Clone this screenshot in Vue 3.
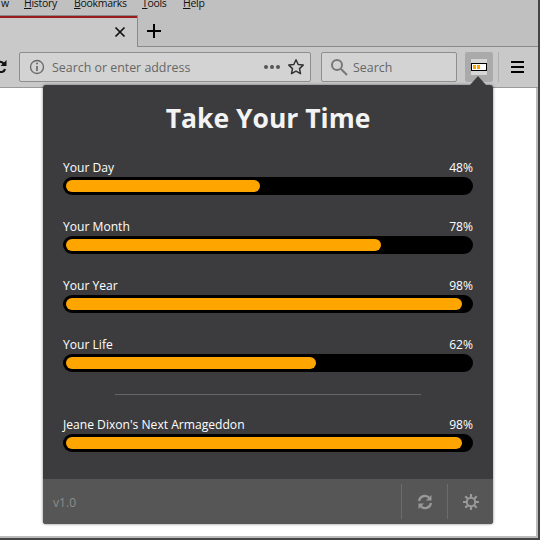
<script setup>
const bars = [
  { label: 'Your Day', pct: 48 },
  { label: 'Your Month', pct: 78 },
  { label: 'Your Year', pct: 98 },
  { label: 'Your Life', pct: 62 }
]
const last = { label: "Jeane Dixon's Next Armageddon", pct: 98 }
</script>

<template>
  <div class="window">
    <div class="menubar">
      <span class="m m-w">w</span>
      <span class="m m-h"><u>H</u>istory</span>
      <span class="m m-b"><u>B</u>ookmarks</span>
      <span class="m m-t"><u>T</u>ools</span>
      <span class="m"><u>H</u>elp</span>
    </div>
    <div class="tabrow">
      <div class="tab">
        <svg class="tab-x" width="12" height="12" viewBox="0 0 12 12"><path d="M1.500 1.500l9 9M10.500 1.500l-9 9" stroke="#111" stroke-width="1.700" fill="none"/></svg>
      </div>
      <svg class="plus" width="14" height="14" viewBox="0 0 14 14"><path d="M7 0v14M0 7h14" stroke="#000" stroke-width="2" fill="none"/></svg>
    </div>
    <div class="navrow">
      <svg class="reload" width="8" height="16" viewBox="0 0 8 16"><path d="M-4 4a6 6 0 0 1 8 1" stroke="#111" stroke-width="2.200" fill="none"/><path d="M6.500 1v6h-6z" fill="#111"/><path d="M-4 13h6a4 4 0 0 0 3-3" stroke="#111" stroke-width="2.200" fill="none"/></svg>
      <div class="urlbar">
        <svg width="16" height="16" viewBox="0 0 16 16"><circle cx="8" cy="8" r="6.500" stroke="#666" stroke-width="1.300" fill="none"/><path d="M8 7v5" stroke="#666" stroke-width="1.600"/><circle cx="8" cy="4.600" r="1" fill="#666"/></svg>
        <span class="url-text">Search or enter address</span>
        <span class="dots"><i></i><i></i><i></i></span>
        <svg width="18" height="18" viewBox="0 0 18 18"><path d="M9 1.800l2.200 4.700 5 .6-3.700 3.500 1 5.100L9 13.200l-4.500 2.500 1-5.100L1.800 7.100l5-.6z" stroke="#333" stroke-width="1.500" fill="none" stroke-linejoin="round"/></svg>
      </div>
      <div class="searchbar">
        <svg width="18" height="18" viewBox="0 0 18 18"><circle cx="7" cy="7" r="5" stroke="#777" stroke-width="2" fill="none"/><path d="M11 11l6 6" stroke="#777" stroke-width="2"/></svg>
        <span class="url-text">Search</span>
      </div>
      <div class="ext">
        <div class="ext-glow">
          <div class="ext-icon"><i></i><i></i></div>
        </div>
      </div>
      <div class="sep"></div>
      <svg class="burger" width="13" height="12" viewBox="0 0 13 12"><path d="M0 1h13M0 6h13M0 11h13" stroke="#000" stroke-width="2"/></svg>
    </div>
    <div class="page">
      <div class="popup">
        <div class="arrow"></div>
        <div class="popup-body">
          <h1>Take Your Time</h1>
          <div class="meter" v-for="b in bars" :key="b.label">
            <div class="meter-head"><span>{{ b.label }}</span><span>{{ b.pct }}%</span></div>
            <div class="track"><div class="fill" :style="{ width: b.pct + '%' }"></div></div>
          </div>
          <hr class="rule" />
          <div class="meter">
            <div class="meter-head"><span>{{ last.label }}</span><span>{{ last.pct }}%</span></div>
            <div class="track"><div class="fill" :style="{ width: last.pct + '%' }"></div></div>
          </div>
        </div>
        <div class="footer">
          <span class="version">v1.0</span>
          <div class="foot-btn">
            <svg width="16" height="16" viewBox="0 0 16 16"><path d="M2 7a6 6 0 0 1 10.500-3M14 9a6 6 0 0 1-10.500 3" stroke="#999" stroke-width="2.200" fill="none"/><path d="M14.500 1v5.500H9zM1.500 15V9.500H7z" fill="#999"/></svg>
          </div>
          <div class="foot-btn">
            <svg width="18" height="18" viewBox="0 0 18 18"><circle cx="9" cy="9" r="4.200" stroke="#999" stroke-width="2" fill="none"/><path d="M9 1v3M9 14v3M1 9h3M14 9h3M3.300 3.300l2.200 2.200M12.500 12.500l2.200 2.200M14.700 3.300l-2.200 2.200M5.500 12.500l-2.200 2.200" stroke="#999" stroke-width="2.200"/></svg>
          </div>
        </div>
      </div>
    </div>
    <div class="bottom"></div>
  </div>
</template>

<style>
html, body { margin: 0; padding: 0; background: #fff; }
</style>

<style scoped>
.window {
  width: 540px;
  height: 540px;
  box-sizing: border-box;
  border-right: 2px solid #454545;
  display: flex;
  flex-direction: column;
  overflow: hidden;
  font-family: "Open Sans", sans-serif;
  background: #c0c0c0;
}
.menubar {
  height: 15px;
  display: flex;
  align-items: flex-start;
  color: #111;
  overflow: hidden;
  flex: none;
}
.m { white-space: nowrap; font-size: 10.500px; letter-spacing: -0.300px; line-height: 14px; margin-top: -4px; }
.m-w { width: 24px; margin-left: 1px; }
.m-h { width: 50px; margin-left: -1px; }
.m-b { width: 68px; }
.m-t { width: 41px; }
.tabrow {
  height: 32px;
  flex: none;
  display: flex;
  align-items: center;
  box-sizing: border-box;
  border-bottom: 1px solid #8a8a8a;
}
.tab {
  width: 138px;
  height: 32px;
  box-sizing: border-box;
  background: #c9c9c9;
  border-top: 1px solid #8a8a8a;
  border-right: 1px solid #8a8a8a;
  box-shadow: inset 0 2px 0 #9b1c1c;
  display: flex;
  align-items: center;
  justify-content: flex-end;
  padding: 2px 11px 0 0;
}
.plus { margin-left: 9px; }
.navrow {
  height: 41px;
  flex: none;
  background: #c9c9c9;
  display: flex;
  align-items: center;
  box-sizing: border-box;
  border-bottom: 1px solid #9a9a9a;
}
.reload { margin-right: 11px; flex: none; }
.urlbar, .searchbar {
  height: 30px;
  box-sizing: border-box;
  border: 1px solid #8e8e8e;
  border-radius: 2px;
  background: #d3d3d3;
  display: flex;
  align-items: center;
}
.urlbar { width: 292px; padding: 0 5px 0 9px; }
.urlbar .url-text { margin-left: 7px; flex: 1; }
.searchbar { width: 136px; margin-left: 10px; padding-left: 8px; }
.searchbar .url-text { margin-left: 5px; }
.url-text { font-size: 12.400px; color: #666; white-space: nowrap; }
.dots { display: flex; gap: 2px; margin-right: 7px; margin-left: -4px; }
.dots i { width: 4px; height: 4px; border-radius: 50%; background: #555; }
.ext {
  width: 28px;
  height: 30px;
  margin-left: 8px;
  background: #aaa;
  border-radius: 2px;
  display: flex;
  justify-content: center;
  align-items: center;
}
.ext-glow {
  width: 16px;
  height: 16px;
  background: #d6d6d6;
  display: flex;
  align-items: center;
  justify-content: center;
}
.ext-icon {
  width: 16px;
  height: 8px;
  box-sizing: border-box;
  border: 1.500px solid #000;
  background: #fff;
  display: flex;
  gap: 1px;
  padding: 1px;
}
.ext-icon i { width: 3px; background: #ffa500; }
.sep { width: 1px; height: 30px; background: #b0b0b0; margin-left: 5px; }
.burger { margin-left: 12px; }
.page { flex: 1; background: #fff; position: relative; border-right: 2px solid #bbb; }
.bottom { height: 4px; flex: none; background: #bbb; box-sizing: border-box; border-bottom: 2px solid #454545; }
.popup {
  position: absolute;
  left: 43px;
  top: -3px;
  width: 450px;
  height: 439px;
  background: #3c3c3e;
  border-radius: 3px;
  box-shadow: 0 0 3px rgba(0,0,0,.5);
  display: flex;
  flex-direction: column;
  color: #fff;
}
.arrow {
  position: absolute;
  right: 7px;
  top: -9px;
  width: 0;
  height: 0;
  border-left: 8.500px solid transparent;
  border-right: 8.500px solid transparent;
  border-bottom: 9px solid #3c3c3e;
}
.popup-body { flex: 1; padding: 0 20px; }
h1 {
  margin: 17px 0 25px;
  font: 700 26.500px/33px "Open Sans", sans-serif;
  text-align: center;
  color: #f3f3f3;
}
.meter { margin-bottom: 24px; }
.meter-head {
  display: flex;
  justify-content: space-between;
  font-size: 12.100px;
  line-height: 15px;
  margin-bottom: 2px;
}
.track {
  height: 18px;
  background: #000;
  border-radius: 9px;
  padding: 3px;
  box-sizing: border-box;
}
.fill { height: 12px; background: #ffa500; border-radius: 6px; }
.rule { border: 0; height: 1px; background: #666; margin: -2px 52px 22px; }
.footer {
  height: 45px;
  background: #565656;
  border-radius: 0 0 3px 3px;
  display: flex;
  align-items: center;
  padding-left: 10px;
}
.version { flex: 1; font-size: 12.100px; color: #8c8c8c; padding-top: 2px; }
.foot-btn {
  width: 46px;
  height: 35px;
  box-sizing: border-box;
  border-left: 1px solid #6c6c6c;
  display: flex;
  align-items: center;
  justify-content: center;
}
</style>
